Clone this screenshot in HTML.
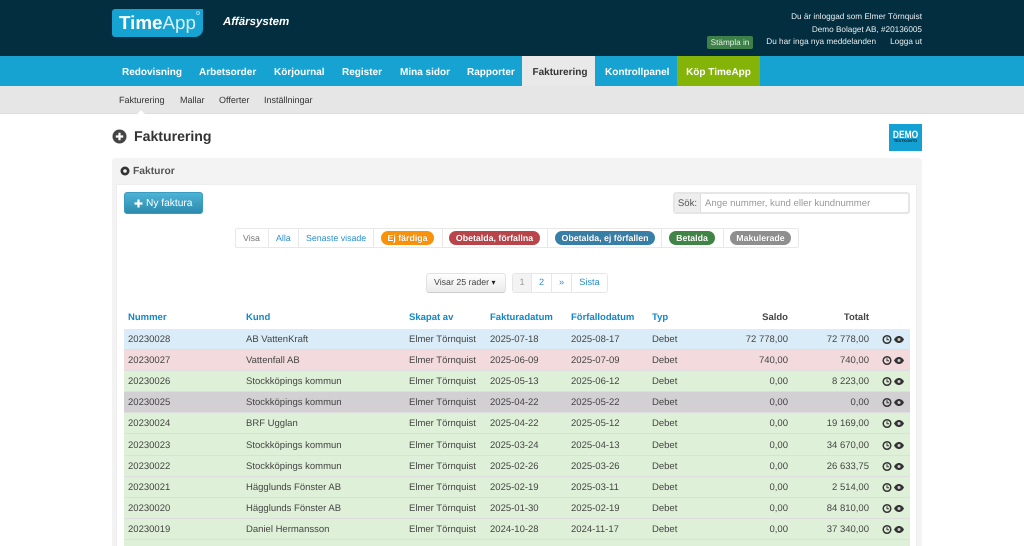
<!DOCTYPE html>
<html><head><meta charset="utf-8"><style>
*{box-sizing:border-box}
html,body{margin:0;padding:0;width:1024px;height:546px;overflow:hidden;background:#fff}
#w{position:relative;width:1024px;height:546px;overflow:hidden;background:#fff;font-family:"Liberation Sans",sans-serif;font-size:10px;color:#444;text-rendering:geometricPrecision;filter:blur(.25px)}
.a{position:absolute;white-space:nowrap}
.hd{left:0;top:0;width:1024px;height:57px;background:#022e3f}
.nav{left:0;top:56px;width:1024px;height:30px;background:#17a3d2}
.nav span{position:absolute;top:0;height:30px;line-height:33px;font-size:10px;font-weight:bold;color:#fff;text-align:center}
.sub{left:0;top:86px;width:1024px;height:28px;background:#e6e6e6;border-bottom:1px solid #ddd}
.sub span{position:absolute;top:0;line-height:29px;font-size:9px;color:#333}
.u{color:#eaf0f2;font-size:8.2px;text-align:right;right:102px}
.panel{left:112px;top:158px;width:810px;height:400px;background:#f3f3f3;border-radius:3px}
.inner{left:116px;top:184px;width:801px;height:380px;background:#fff;border:1px solid #eee}
.filter{left:235px;top:228px;width:564px;height:20px;background:#fff;border:1px solid #e8e8e8;border-radius:2px}
.filter i{position:absolute;top:0;width:1px;height:18px;background:#e8e8e8}
.lnk{font-size:8.8px;line-height:18px;top:229px;color:#2a8fcb}
.pill{top:231px;height:14px;line-height:14px;border-radius:7px;color:#fff;font-weight:bold;font-size:8.8px;text-align:center;text-shadow:0 0 1px rgba(0,0,0,.25)}
.th{top:311px;font-size:9.5px;font-weight:bold;color:#1487c9;line-height:13px}
.row{left:124px;width:786px;height:21px;border-bottom:1px solid #dedede;font-size:9.5px;line-height:22px;color:#444}
.row span{position:absolute;top:0}
.row .r{text-align:right}
.row svg{position:absolute;top:5px}
.pg{top:273px;height:18px;color:#2a8fcb;font-size:9.2px;line-height:18px;text-align:center}
</style></head><body><div id="w">
<div class="a hd"></div>
<div class="a" style="left:112px;top:9px;width:91px;height:28px;background:#17a3d2;border-radius:3px 0 8px 3px;color:#fff;font-size:18.8px;line-height:28px;padding-left:7px"><b>Time</b><span style="font-weight:normal;color:#d4f0fa">App</span></div>
<div class="a" style="left:196px;top:11px;width:4px;height:4px;border:1px solid #8fd3ea;border-radius:50%"></div>
<div class="a" style="left:223px;top:16px;color:#fff;font-size:11.5px;font-weight:bold;font-style:italic">Affärsystem</div>
<div class="a u" style="top:12px">Du är inloggad som Elmer Törnquist</div>
<div class="a u" style="top:25px">Demo Bolaget AB, #20136005</div>
<div class="a" style="left:707px;top:36px;width:46px;height:13px;background:#3d8048;border-radius:2px;color:#e4f0e4;font-size:8.2px;line-height:13px;text-align:center">Stämpla in</div>
<div class="a u" style="top:37px;right:148px">Du har inga nya meddelanden</div>
<div class="a u" style="top:37px">Logga ut</div>

<div class="a nav">
<span style="left:122px">Redovisning</span>
<span style="left:199px">Arbetsorder</span>
<span style="left:274px">Körjournal</span>
<span style="left:342px">Register</span>
<span style="left:400px">Mina sidor</span>
<span style="left:467px">Rapporter</span>
<span style="left:522px;width:73px;padding-left:3px;background:#e9e9e9;color:#333">Fakturering</span>
<span style="left:605px">Kontrollpanel</span>
<span style="left:677px;width:83px;background:#84b408">Köp TimeApp</span>
</div>
<div class="a sub">
<span style="left:119px">Fakturering</span>
<span style="left:180px">Mallar</span>
<span style="left:219px">Offerter</span>
<span style="left:264px">Inställningar</span>
</div>
<div class="a" style="left:136px;top:109px;width:10px;height:10px;background:#fff;border:1px solid #ddd;border-width:1px 0 0 1px;transform:rotate(45deg) scale(.7)"></div>

<svg class="a" style="left:112px;top:129px" width="15" height="15" viewBox="0 0 15 15"><circle cx="7.5" cy="7.5" r="7" fill="#444"/><path d="M7.5 3.8v7.4M3.8 7.5h7.4" stroke="#fff" stroke-width="2.2"/></svg>
<div class="a" style="left:134px;top:128px;font-size:14.1px;font-weight:bold;color:#333;line-height:17px">Fakturering</div>
<div class="a" style="left:889px;top:124px;width:33px;height:27px;background:#12a1d2"></div>
<div class="a" style="left:889px;top:130px;width:33px;text-align:center;color:#fff;font-weight:bold;font-size:10.5px;line-height:10px;transform:scaleX(.8)">DEMO</div>
<div class="a" style="left:889px;top:139px;width:33px;text-align:center;color:#03212c;font-weight:bold;font-size:3.8px;line-height:5px">TESTKONTO</div>

<div class="a panel"></div>
<svg class="a" style="left:120px;top:166px" width="10" height="10" viewBox="0 0 10 10"><circle cx="5" cy="5" r="4.5" fill="#333"/><circle cx="5" cy="5" r="1.8" fill="#f3f3f3"/></svg>
<div class="a" style="left:133px;top:165px;font-size:10.3px;font-weight:bold;color:#555;line-height:13px">Fakturor</div>
<div class="a inner"></div>

<div class="a" style="left:124px;top:192px;width:79px;height:22px;border-radius:3px;background:linear-gradient(#4cb4d6,#2c8aae);border:1px solid #3a9cc0;color:#fff;font-size:10.2px;line-height:21px;padding-left:21px">Ny faktura</div>
<svg class="a" style="left:134px;top:199px" width="9" height="9" viewBox="0 0 9 9"><path d="M4.5 .5v8M.5 4.5h8" stroke="#fff" stroke-width="2.2"/></svg>

<div class="a" style="left:673px;top:192px;width:237px;height:22px;border:2px solid #e6e6e6;border-radius:3px;background:#fff"></div>
<div class="a" style="left:675px;top:194px;width:26px;height:18px;background:#eee;border-right:1px solid #ddd;font-size:9.6px;line-height:19px;text-align:center;color:#555">Sök:</div>
<div class="a" style="left:705px;top:194px;font-size:9.6px;line-height:19px;color:#999">Ange nummer, kund eller kundnummer</div>

<div class="a filter">
<i style="left:32px"></i><i style="left:62px"></i><i style="left:137px"></i><i style="left:206px"></i><i style="left:311px"></i><i style="left:425px"></i><i style="left:487px"></i>
</div>
<div class="a lnk" style="left:243px;color:#777">Visa</div>
<div class="a lnk" style="left:276px">Alla</div>
<div class="a lnk" style="left:306px">Senaste visade</div>
<div class="a pill" style="left:381px;width:53px;background:#f8920b">Ej färdiga</div>
<div class="a pill" style="left:449px;width:91px;background:#b9444a">Obetalda, förfallna</div>
<div class="a pill" style="left:555px;width:100px;background:#387fa8">Obetalda, ej förfallen</div>
<div class="a pill" style="left:669px;width:46px;background:#408545">Betalda</div>
<div class="a pill" style="left:730px;width:61px;background:#8f8f8f">Makulerade</div>

<div class="a" style="left:426px;top:273px;width:80px;height:20px;border-radius:3px;background:linear-gradient(#fdfdfd,#ebebeb);border:1px solid #e2e2e2;border-bottom-color:#ccc;font-size:8.8px;line-height:17px;padding-left:7px;color:#444">Visar 25 rader <span style="font-size:8px;color:#222">▾</span></div>
<div class="a" style="left:512px;top:273px;width:96px;height:20px;border:1px solid #e6e6e6;border-radius:3px;background:#fff"></div>
<div class="a pg" style="top:274px;line-height:17px;left:513px;width:19px;background:#f3f3f3;color:#999;border-right:1px solid #e6e6e6">1</div>
<div class="a pg" style="top:274px;line-height:17px;left:532px;width:20px;border-right:1px solid #e6e6e6">2</div>
<div class="a pg" style="top:274px;line-height:17px;left:552px;width:20px;border-right:1px solid #e6e6e6">»</div>
<div class="a pg" style="top:274px;line-height:17px;left:572px;width:35px">Sista</div>

<div class="a th" style="left:128px">Nummer</div>
<div class="a th" style="left:246px">Kund</div>
<div class="a th" style="left:409px">Skapat av</div>
<div class="a th" style="left:490px">Fakturadatum</div>
<div class="a th" style="left:571px">Förfallodatum</div>
<div class="a th" style="left:652px">Typ</div>
<div class="a th" style="right:236px;color:#444">Saldo</div>
<div class="a th" style="right:155px;color:#444">Totalt</div>

<svg width="0" height="0" style="position:absolute"><defs>
<g id="ic"><circle cx="5" cy="5.5" r="3.8" fill="none" stroke="#333" stroke-width="1.5"/><path d="M5 3.3V5.8H7" fill="none" stroke="#333" stroke-width="1"/><path d="M12 5.5C13.5 3 15 2 17 2S20.5 3 22 5.5C20.5 8 19 9 17 9S13.5 8 12 5.5Z" fill="#333"/><circle cx="17" cy="5.5" r="1.5" fill="#cfcfcf"/></g>
</defs></svg>

<div class="a row" style="top:329px;background:#d9ecf7"><span style="left:4px">20230028</span><span style="left:122px">AB VattenKraft</span><span style="left:285px">Elmer Törnquist</span><span style="left:366px">2025-07-18</span><span style="left:447px">2025-08-17</span><span style="left:528px">Debet</span><span class="r" style="right:122px">72 778,00</span><span class="r" style="right:41px">72 778,00</span><svg style="left:758px" width="24" height="11"><use href="#ic"/></svg></div>
<div class="a row" style="top:350px;background:#f3dbdd"><span style="left:4px">20230027</span><span style="left:122px">Vattenfall AB</span><span style="left:285px">Elmer Törnquist</span><span style="left:366px">2025-06-09</span><span style="left:447px">2025-07-09</span><span style="left:528px">Debet</span><span class="r" style="right:122px">740,00</span><span class="r" style="right:41px">740,00</span><svg style="left:758px" width="24" height="11"><use href="#ic"/></svg></div>
<div class="a row" style="top:371px;background:#dff0d8"><span style="left:4px">20230026</span><span style="left:122px">Stockköpings kommun</span><span style="left:285px">Elmer Törnquist</span><span style="left:366px">2025-05-13</span><span style="left:447px">2025-06-12</span><span style="left:528px">Debet</span><span class="r" style="right:122px">0,00</span><span class="r" style="right:41px">8 223,00</span><svg style="left:758px" width="24" height="11"><use href="#ic"/></svg></div>
<div class="a row" style="top:392px;background:#d2d0d2"><span style="left:4px">20230025</span><span style="left:122px">Stockköpings kommun</span><span style="left:285px">Elmer Törnquist</span><span style="left:366px">2025-04-22</span><span style="left:447px">2025-05-22</span><span style="left:528px">Debet</span><span class="r" style="right:122px">0,00</span><span class="r" style="right:41px">0,00</span><svg style="left:758px" width="24" height="11"><use href="#ic"/></svg></div>
<div class="a row" style="top:413px;background:#dff0d8"><span style="left:4px">20230024</span><span style="left:122px">BRF Ugglan</span><span style="left:285px">Elmer Törnquist</span><span style="left:366px">2025-04-22</span><span style="left:447px">2025-05-12</span><span style="left:528px">Debet</span><span class="r" style="right:122px">0,00</span><span class="r" style="right:41px">19 169,00</span><svg style="left:758px" width="24" height="11"><use href="#ic"/></svg></div>
<div class="a row" style="top:434px;height:22px;line-height:23px;background:#dff0d8"><span style="left:4px">20230023</span><span style="left:122px">Stockköpings kommun</span><span style="left:285px">Elmer Törnquist</span><span style="left:366px">2025-03-24</span><span style="left:447px">2025-04-13</span><span style="left:528px">Debet</span><span class="r" style="right:122px">0,00</span><span class="r" style="right:41px">34 670,00</span><svg style="left:758px;top:6px" width="24" height="11"><use href="#ic"/></svg></div>
<div class="a row" style="top:456px;background:#dff0d8"><span style="left:4px">20230022</span><span style="left:122px">Stockköpings kommun</span><span style="left:285px">Elmer Törnquist</span><span style="left:366px">2025-02-26</span><span style="left:447px">2025-03-26</span><span style="left:528px">Debet</span><span class="r" style="right:122px">0,00</span><span class="r" style="right:41px">26 633,75</span><svg style="left:758px" width="24" height="11"><use href="#ic"/></svg></div>
<div class="a row" style="top:477px;background:#dff0d8"><span style="left:4px">20230021</span><span style="left:122px">Hägglunds Fönster AB</span><span style="left:285px">Elmer Törnquist</span><span style="left:366px">2025-02-19</span><span style="left:447px">2025-03-11</span><span style="left:528px">Debet</span><span class="r" style="right:122px">0,00</span><span class="r" style="right:41px">2 514,00</span><svg style="left:758px" width="24" height="11"><use href="#ic"/></svg></div>
<div class="a row" style="top:498px;background:#dff0d8"><span style="left:4px">20230020</span><span style="left:122px">Hägglunds Fönster AB</span><span style="left:285px">Elmer Törnquist</span><span style="left:366px">2025-01-30</span><span style="left:447px">2025-02-19</span><span style="left:528px">Debet</span><span class="r" style="right:122px">0,00</span><span class="r" style="right:41px">84 810,00</span><svg style="left:758px" width="24" height="11"><use href="#ic"/></svg></div>
<div class="a row" style="top:519px;background:#dff0d8"><span style="left:4px">20230019</span><span style="left:122px">Daniel Hermansson</span><span style="left:285px">Elmer Törnquist</span><span style="left:366px">2024-10-28</span><span style="left:447px">2024-11-17</span><span style="left:528px">Debet</span><span class="r" style="right:122px">0,00</span><span class="r" style="right:41px">37 340,00</span><svg style="left:758px" width="24" height="11"><use href="#ic"/></svg></div>
<div class="a row" style="top:540px;background:#dff0d8"></div>
</div></body></html>
